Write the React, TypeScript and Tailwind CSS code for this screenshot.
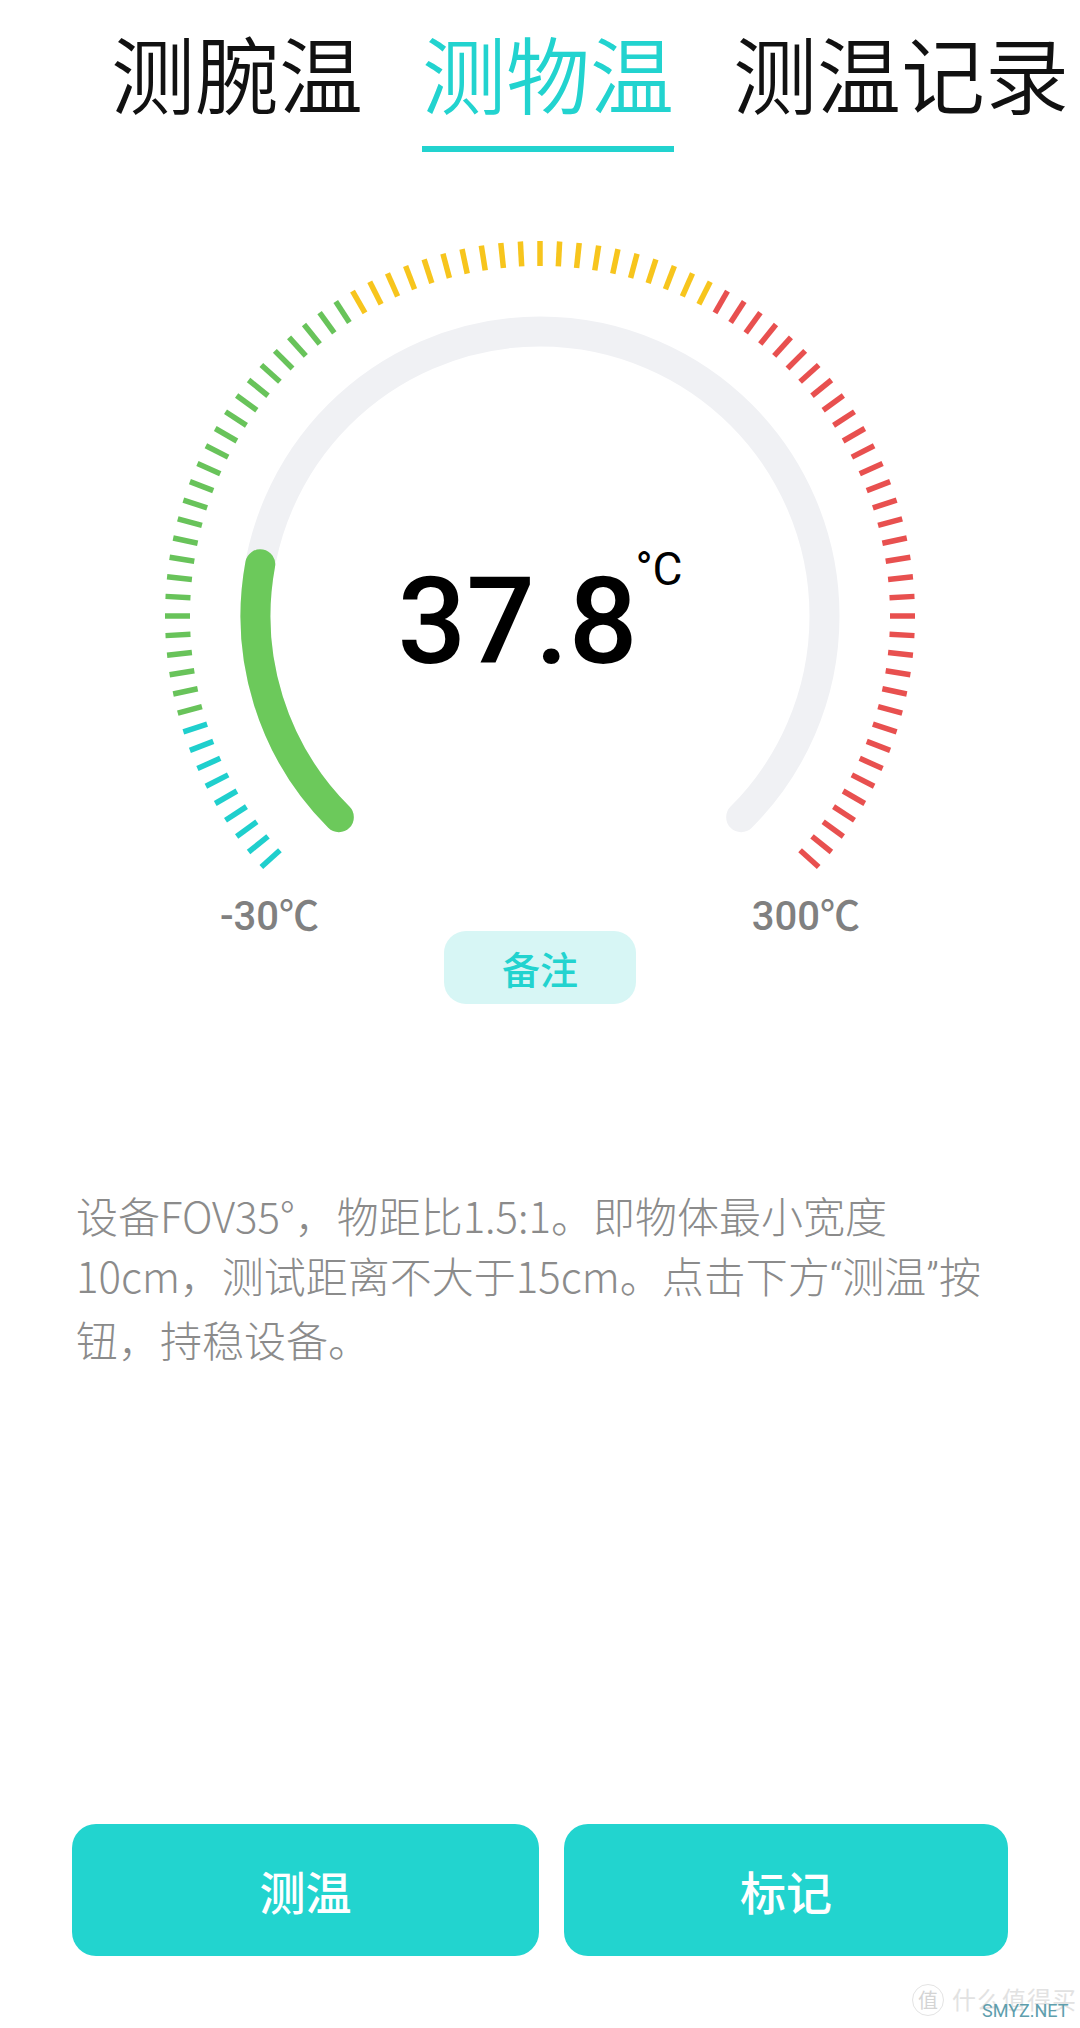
import React from "react";

const CX = 540;
const CY = 464;

function pt(r: number, deg: number) {
  const a = (deg * Math.PI) / 180;
  return { x: CX + r * Math.sin(a), y: CY - r * Math.cos(a) };
}

function arcPath(r: number, from: number, to: number) {
  const s = pt(r, from);
  const e = pt(r, to);
  const large = to - from > 180 ? 1 : 0;
  return `M ${s.x.toFixed(2)} ${s.y.toFixed(2)} A ${r} ${r} 0 ${large} 1 ${e.x.toFixed(2)} ${e.y.toFixed(2)}`;
}

function tickColor(k: number) {
  if (k <= 8) return "#1fcfcd";
  if (k <= 33) return "#68c35a";
  if (k <= 53) return "#f7c51d";
  return "#e8504f";
}

function Gauge() {
  const ticks = Array.from({ length: 89 }, (_, k) => {
    const deg = -132 + 3 * k;
    const a = pt(350, deg);
    const b = pt(375, deg);
    return (
      <line
        key={k}
        x1={a.x}
        y1={a.y}
        x2={b.x}
        y2={b.y}
        stroke={tickColor(k)}
        strokeWidth={5.5}
      />
    );
  });
  const value = 37.8;
  const endDeg = -135 + ((value + 30) / 330) * 270;
  return (
    <div className="relative h-[740px] w-full">
      <svg width="1080" height="740" viewBox="0 0 1080 740" className="block">
        {ticks}
        <path
          d={arcPath(284.5, -135, 135)}
          fill="none"
          stroke="#f0f1f4"
          strokeWidth={30}
          strokeLinecap="round"
        />
        <path
          d={arcPath(284.5, -135, endDeg)}
          fill="none"
          stroke="#6cc95b"
          strokeWidth={30}
          strokeLinecap="round"
        />
      </svg>
      <div className="absolute inset-x-0 top-[410px] flex justify-center items-start">
        <span
          className="text-[121px] leading-none font-medium text-black"
          style={{ fontFamily: "Roboto, 'Liberation Sans', sans-serif" }}
        >
          37.8
        </span>
        <span
          className="text-[46px] leading-none font-normal text-black mt-[-16px] ml-[-2px]"
          style={{ fontFamily: "Roboto, 'Liberation Sans', sans-serif" }}
        >
          °C
        </span>
      </div>
    </div>
  );
}

export default function App() {
  const cjk = "'Noto Sans CJK SC', 'Noto Sans', sans-serif";
  const tabs = [
    { label: "测腕温", active: false },
    { label: "测物温", active: true },
    { label: "测温记录", active: false },
  ];
  const q = { fontFamily: "Roboto, 'Liberation Sans', sans-serif" };
  return (
    <div
      className="relative w-full min-h-[2028px] bg-white flex flex-col overflow-hidden"
      style={{ fontFamily: cjk }}
    >
      <div className="flex pl-[111px] gap-[59px] pt-[30px] whitespace-nowrap">
        {tabs.map((t) => (
          <div key={t.label} className="flex flex-col shrink-0">
            <span
              className={
                "text-[84px] leading-none font-[350] " +
                (t.active ? "text-[#22d3cf]" : "text-[#111111]")
              }
            >
              {t.label}
            </span>
            <div
              className={
                "h-[6px] mt-[32px] " + (t.active ? "bg-[#22d3cf]" : "bg-transparent")
              }
            />
          </div>
        ))}
      </div>

      <Gauge />

      <div
        className="flex justify-between pl-[220px] pr-[220px] mt-[5px] text-[40px] leading-none font-medium text-[#808080]"
        style={{ fontFamily: "Roboto, 'Noto Sans CJK SC', sans-serif" }}
      >
        <span>-30℃</span>
        <span>300℃</span>
      </div>

      <div className="self-center mt-[-6px] w-[192px] h-[73px] rounded-[22px] bg-[#d7f6f5] flex items-center justify-center">
        <span className="text-[38px] leading-none font-medium text-[#22d3cf]">备注</span>
      </div>

      <p className="mt-[181px] px-[76px] text-[42px] leading-[60px] font-light text-[#8b8b8b] whitespace-nowrap">
        设备FOV35°，物距比1.5:1。即物体最小宽度
        <br />
        10cm，测试距离不大于15cm。点击下方<span style={q}>“</span>测温<span style={q}>”</span>按
        <br />
        钮，持稳设备。
      </p>

      <div className="flex-1" />

      <div className="flex gap-[25px] px-[72px] pb-[72px]">
        <button className="w-[467px] h-[132px] rounded-[24px] bg-[#22d4cf] text-white text-[46px] font-medium leading-none flex items-center justify-center">
          测温
        </button>
        <button className="flex-1 h-[132px] rounded-[24px] bg-[#22d4cf] text-white text-[46px] font-medium leading-none flex items-center justify-center">
          标记
        </button>
      </div>

      <div className="absolute left-[912px] top-[1984px] flex items-center">
        <div className="w-[32px] h-[32px] rounded-full border border-[#e4e4e4] flex items-center justify-center text-[20px] leading-none text-[#d4d4d4]">
          值
        </div>
        <div className="relative ml-[8px]">
          <span className="text-[24px] leading-none text-[#e2e2e2] tracking-[1px]">什么值得买</span>
          <span
            className="absolute left-[30px] top-[15px] text-[18px] leading-none text-[#5e9ead]"
            style={{ fontFamily: "Roboto, sans-serif" }}
          >
            SMYZ.NET
          </span>
        </div>
      </div>
    </div>
  );
}
